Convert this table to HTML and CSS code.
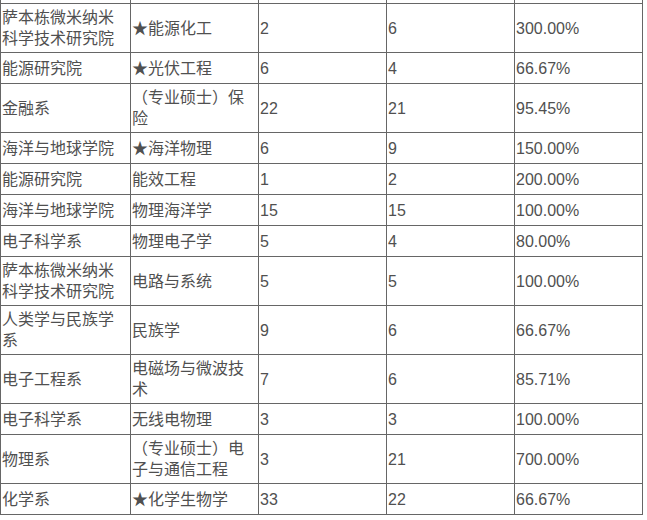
FILE: index.html
```html
<!DOCTYPE html>
<html lang="zh-CN">
<head>
<meta charset="utf-8">
<link rel="stylesheet" href="styles.css">
</head>
<body>
<table class="grid">
<colgroup><col class="c1"><col class="c2"><col class="c3"><col class="c4"><col class="c5"></colgroup>
<tbody>
<tr class="cut"><td></td><td></td><td></td><td></td><td></td></tr>
<tr><td>萨本栋微米纳米科学技术研究院</td><td>★能源化工</td><td>2</td><td>6</td><td>300.00%</td></tr>
<tr><td>能源研究院</td><td>★光伏工程</td><td>6</td><td>4</td><td>66.67%</td></tr>
<tr><td>金融系</td><td>（专业硕士）保险</td><td>22</td><td>21</td><td>95.45%</td></tr>
<tr><td>海洋与地球学院</td><td>★海洋物理</td><td>6</td><td>9</td><td>150.00%</td></tr>
<tr><td>能源研究院</td><td>能效工程</td><td>1</td><td>2</td><td>200.00%</td></tr>
<tr><td>海洋与地球学院</td><td>物理海洋学</td><td>15</td><td>15</td><td>100.00%</td></tr>
<tr><td>电子科学系</td><td>物理电子学</td><td>5</td><td>4</td><td>80.00%</td></tr>
<tr><td>萨本栋微米纳米科学技术研究院</td><td>电路与系统</td><td>5</td><td>5</td><td>100.00%</td></tr>
<tr><td>人类学与民族学系</td><td>民族学</td><td>9</td><td>6</td><td>66.67%</td></tr>
<tr><td>电子工程系</td><td>电磁场与微波技术</td><td>7</td><td>6</td><td>85.71%</td></tr>
<tr><td>电子科学系</td><td>无线电物理</td><td>3</td><td>3</td><td>100.00%</td></tr>
<tr><td>物理系</td><td>（专业硕士）电子与通信工程</td><td>3</td><td>21</td><td>700.00%</td></tr>
<tr><td>化学系</td><td>★化学生物学</td><td>33</td><td>22</td><td>66.67%</td></tr>
</tbody>
</table>
</body>
</html>
```

FILE: styles.css
```css
html, body {
  margin: 0;
  padding: 0;
  background: #ffffff;
}

.grid {
  border-collapse: collapse;
  table-layout: fixed;
  width: 642px;
  font-family: "Liberation Sans", "Noto Sans CJK SC", sans-serif;
  font-size: 16px;
  line-height: 21px;
  color: #505050;
}

.c1 { width: 130px; }
.c2 { width: 128px; }
.c3 { width: 128px; }
.c4 { width: 128px; }
.c5 { width: 128px; }

.grid td {
  border: 1px solid #666666;
  padding: 3px 1px 3px 1px;
  height: 24px;
  vertical-align: middle;
  text-align: left;
  word-break: break-all;
}

.grid .cut td {
  border-top: 0;
  height: 3px;
  padding: 0;
  line-height: 0;
}
```
